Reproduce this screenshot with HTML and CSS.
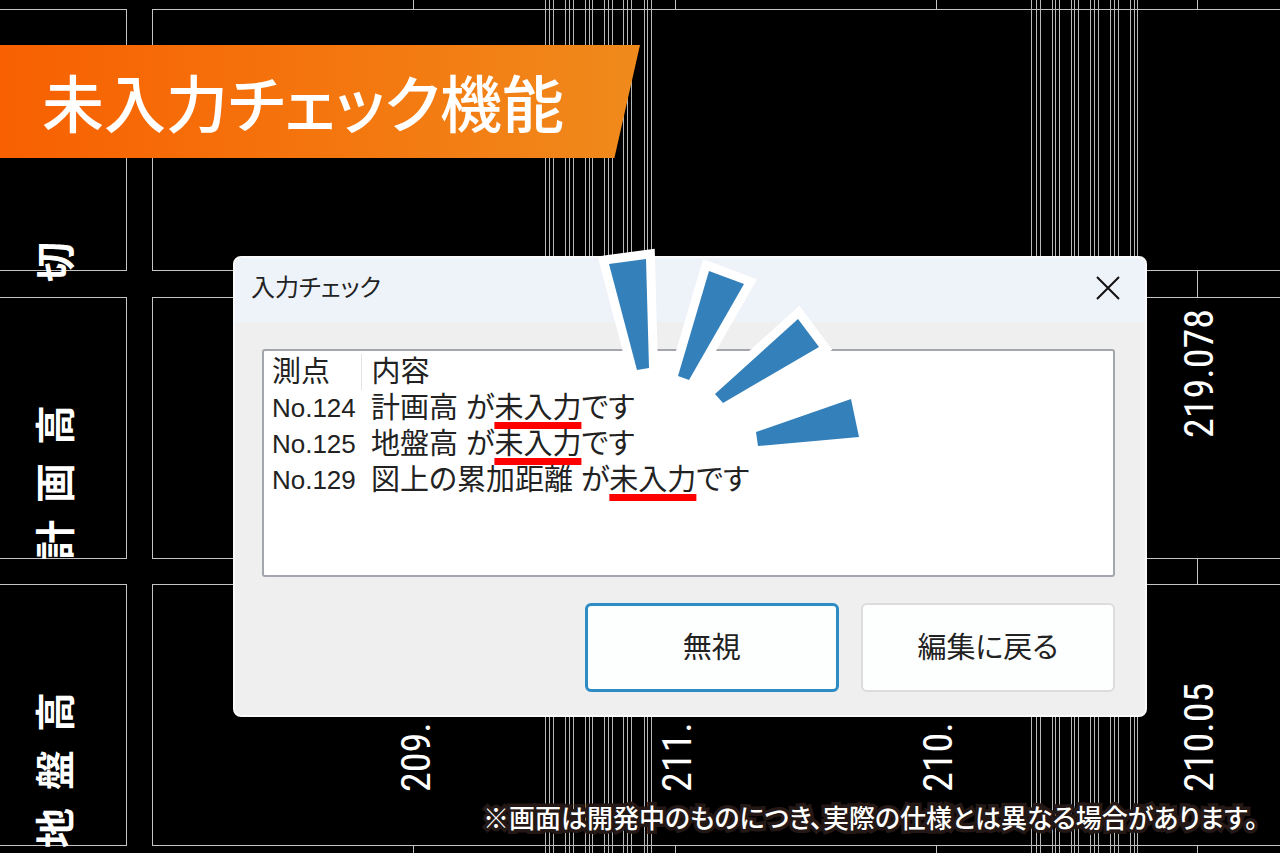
FILE: index.html
```
<!DOCTYPE html>
<html lang="ja">
<head>
  <meta charset="UTF-8">
  <meta name="viewport" content="width=device-width, initial-scale=1.0">
  <title>未入力チェック機能</title>
  <link rel="stylesheet" href="styles.css">
</head>
<body>
  <!-- CAD drawing behind the dialog -->
  <svg class="drawing" viewBox="0 0 1280 853" preserveAspectRatio="xMidYMin slice">
    <g class="grid-lines">
      <path d="M0 9H126V270H0 M1280 9H152V270H1280"/>
      <path d="M0 297H126V558H0 M1280 297H152V558H1280"/>
      <path d="M0 584H126V845H0 M1280 584H152V845H1280"/>
      <path d="M413 0V9 M675 0V9 M936 0V9 M1197 0V9"/>
      <path d="M1197 270V297 M1197 558V584"/>
      <path d="M413 845V853 M675 845V853 M936 845V853 M1197 845V853"/>
    </g>
    <g class="fine-lines">
      <path d="M545 0V853 M549 0V853 M553 0V853 M565 0V853 M569 0V853 M573 0V853 M585 0V853 M589 0V853 M592 0V853"/>
      <path d="M604 0V853 M608 0V853 M612 0V853 M623 0V853 M627 0V853 M631 0V853 M644 0V853 M647 0V853 M651 0V853"/>
      <path d="M1031 0V853 M1036 0V853 M1040 0V853 M1052 0V853 M1055 0V853 M1059 0V853 M1071 0V853 M1074 0V853 M1078 0V853"/>
      <path d="M1090 0V853 M1094 0V853 M1098 0V853 M1110 0V853 M1114 0V853 M1118 0V853 M1130 0V853 M1134 0V853 M1137 0V853"/>
    </g>
    <g class="row-names">
      <text transform="translate(53 262) rotate(-90)">切</text>
      <text transform="translate(53 425) rotate(-90)">高</text>
      <text transform="translate(53 483) rotate(-90)">画</text>
      <text transform="translate(53 540) rotate(-90)">計</text>
      <text transform="translate(53 712) rotate(-90)">高</text>
      <text transform="translate(53 770) rotate(-90)">盤</text>
      <text transform="translate(53 828) rotate(-90)">地</text>
    </g>
    <g class="heights">
      <text transform="translate(1213 438) rotate(-90)">219.078</text>
      <text transform="translate(1213 792) rotate(-90)">210.05</text>
      <text transform="translate(952 792) rotate(-90)">210.</text>
      <text transform="translate(691 792) rotate(-90)">211.</text>
      <text transform="translate(430 792) rotate(-90)">209.</text>
    </g>
  </svg>

  <main>
    <h1 class="banner">未入力チェック機能</h1>

    <section class="dialog" role="dialog" aria-labelledby="dialog-title">
      <header class="title-bar">
        <h2 id="dialog-title">入力チェック</h2>
        <button class="close-button" aria-label="閉じる">
          <svg width="26" height="26" viewBox="0 0 26 26"><path d="M2 2L24 24M24 2L2 24"/></svg>
        </button>
      </header>

      <div class="dialog-body">
        <div class="list-box">
          <table>
            <thead>
              <tr><th>測点</th><th>内容</th></tr>
            </thead>
            <tbody>
              <tr><td>No.124</td><td>計画高 が<em>未入力</em>です</td></tr>
              <tr><td>No.125</td><td>地盤高 が<em>未入力</em>です</td></tr>
              <tr><td>No.129</td><td>図上の累加距離 が<em>未入力</em>です</td></tr>
            </tbody>
          </table>
        </div>
        <div class="buttons">
          <button class="button primary">無視</button>
          <button class="button">編集に戻る</button>
        </div>
      </div>

      <svg class="rays" width="280" height="220" viewBox="590 240 280 220">
        <path d="M609 264L646 259L649 368L637 370Z"/>
        <path d="M709 271L744 284L689 380L678 376Z"/>
        <path d="M798 319L819 347L723 403L715 394Z"/>
        <path d="M851 399L859 437L758 446L756 432Z"/>
      </svg>
    </section>

    <p class="note">※画面は開発中のものにつき、実際の仕様とは異なる場合があります。</p>
  </main>
</body>
</html>
```
FILE: styles.css
```
* {
  box-sizing: border-box;
}

body {
  margin: 0;
  min-height: 100vh;
  position: relative;
  overflow-x: hidden;
  background-color: #000;
  color: #222;
  font-family: "Noto Sans CJK JP", sans-serif;
}

.drawing {
  position: absolute;
  top: 0;
  left: 0;
  width: 100%;
  height: 100%;
}

.grid-lines, .fine-lines {
  fill: none;
  stroke: #c4c4c4;
  stroke-width: 1;
  shape-rendering: crispEdges;
}

.fine-lines {
  stroke: #b8b8b8;
}

.row-names, .heights {
  fill: #fff;
}

.row-names {
  font-size: 40px;
  font-weight: 700;
  text-anchor: middle;
  dominant-baseline: central;
}

.heights {
  font-family: "Liberation Sans Narrow", "Roboto Condensed", "Open Sans Condensed", "Liberation Sans", sans-serif;
  font-size: 40px;
}

main {
  position: relative;
  display: flex;
  flex-direction: column;
  padding-top: 45px;
}

.banner {
  width: 50%;
  min-width: 600px;
  margin: 0 0 98px;
  padding-left: 42px;
  background: linear-gradient(to right, #f86000, #f08a1c);
  clip-path: polygon(0 0, 100% 0, 96% 100%, 0 100%);
  color: #fff;
  font-size: 62px;
  font-weight: 500;
  line-height: 113px;
  white-space: nowrap;
  font-feature-settings: "palt";
}

.dialog {
  position: relative;
  width: 71.4%;
  min-width: 600px;
  margin-left: 18.2%;
  background-color: #efefef;
  border: 2px solid #fafafa;
  border-radius: 8px;
  font-family: "Liberation Sans", "Noto Sans CJK JP", sans-serif;
}

.title-bar {
  display: flex;
  align-items: center;
  justify-content: space-between;
  height: 64px;
  padding: 0 22px 4px 16px;
  background-color: #eef2f9;
  border-radius: 8px 8px 0 0;
}

.title-bar h2 {
  margin: 0;
  font-size: 24px;
  font-weight: 400;
  line-height: 36px;
  font-feature-settings: "palt";
}

.close-button {
  display: flex;
  padding: 2px;
  border: none;
  background: none;
}

.close-button path {
  stroke: #111;
  stroke-width: 2;
}

.dialog-body {
  padding: 27px 30px 23px 27px;
}

.list-box {
  height: 228px;
  padding: 3px 8px;
  border: 2px solid #a3a6ac;
  border-radius: 3px;
  background-color: #fff;
}

table {
  border-collapse: collapse;
  font-size: 29px;
  line-height: 36px;
  white-space: nowrap;
}

th, td {
  height: 36px;
  padding: 0;
  font-weight: 400;
  text-align: left;
  font-feature-settings: "palt";
}

th:first-child, td:first-child {
  width: 90px;
}

th:first-child {
  border-right: 1px solid #e4e4e4;
}

th:last-child, td:last-child {
  padding-left: 9px;
}

td:first-child {
  font-size: 26px;
}

em {
  font-style: normal;
  text-decoration: underline 7px #f00;
  text-underline-offset: 4px;
  text-decoration-skip-ink: none;
}

.buttons {
  display: flex;
  justify-content: flex-end;
  gap: 22px;
  margin-top: 26px;
}

.button {
  width: 254px;
  height: 89px;
  border: 2px solid #dcdcdc;
  border-radius: 6px;
  background-color: #fdfefe;
  color: #222;
  font-family: inherit;
  font-size: 29px;
  line-height: 36px;
  font-feature-settings: "palt";
}

.primary {
  border: 3px solid #2d8cc4;
}

.rays {
  position: absolute;
  top: -18px;
  left: 355px;
}

.rays path {
  fill: #3380ba;
  stroke: #fff;
  stroke-width: 18;
  paint-order: stroke;
}

.note {
  margin: 82px 22px 0 0;
  color: #fff;
  font-size: 26px;
  font-weight: 500;
  line-height: 36px;
  text-align: right;
  -webkit-text-stroke: 7px #231815;
  paint-order: stroke fill;
  font-feature-settings: "palt";
}
```
